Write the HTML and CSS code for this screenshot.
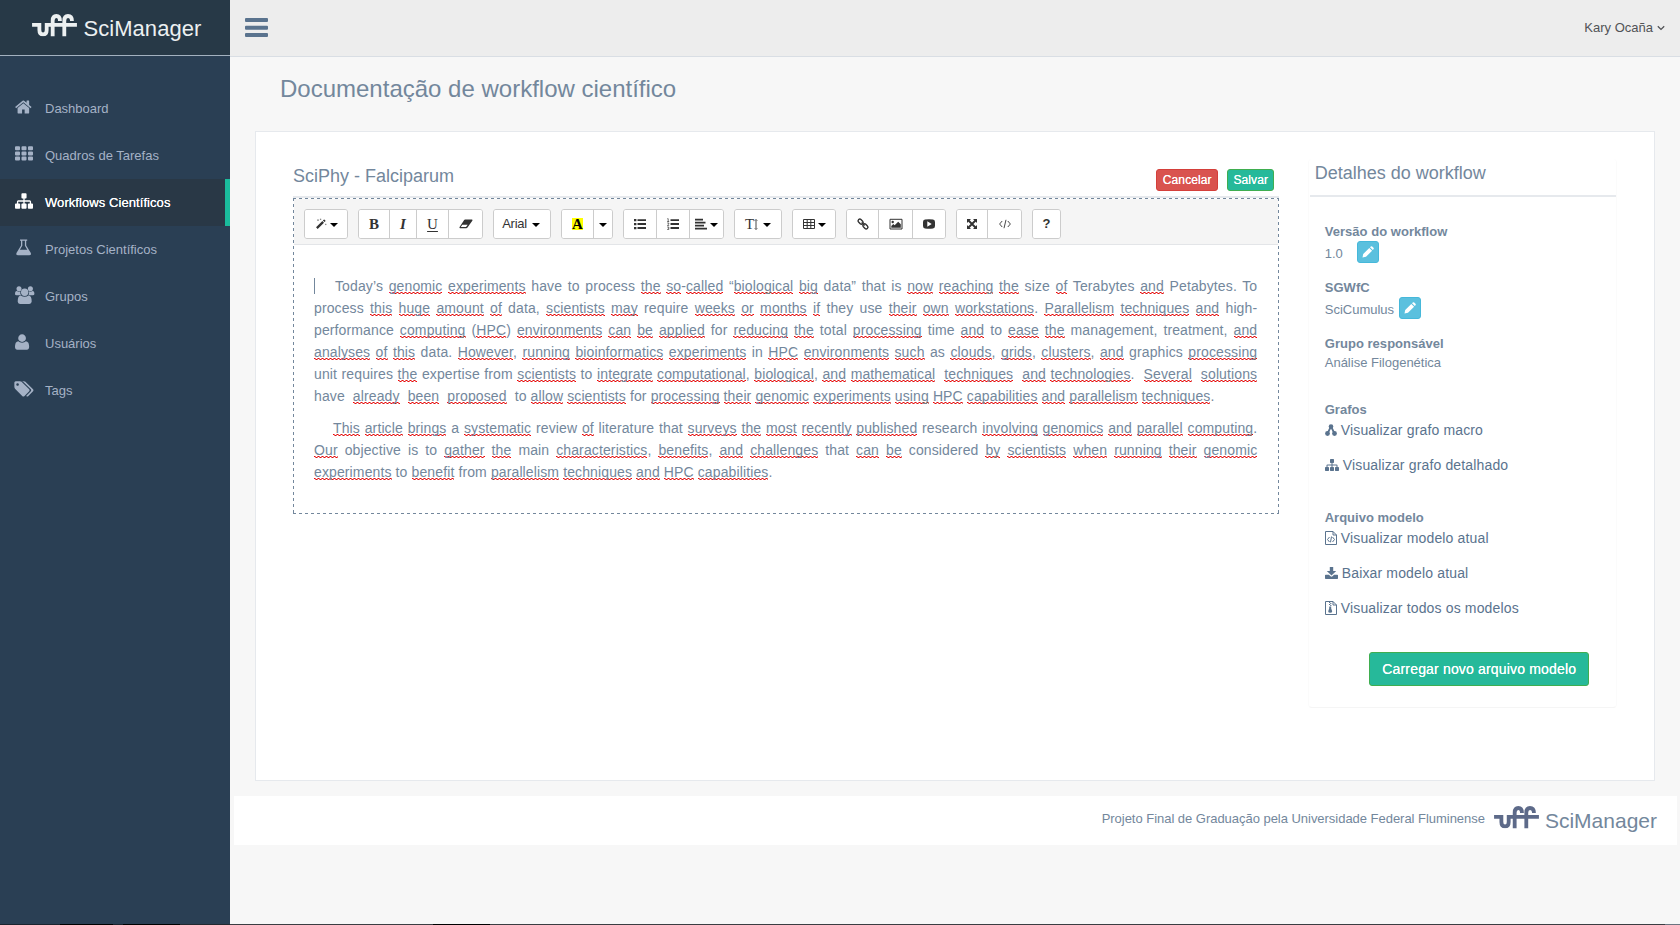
FILE: index.html
```html
<!DOCTYPE html>
<html lang="pt-BR">
<head>
<meta charset="utf-8">
<title>SciManager</title>
<link rel="stylesheet" href="styles.css">
</head>
<body>
<svg class="defs" width="0" height="0">
  <symbol id="uff" viewBox="0 0 135 68"><g fill="none" stroke="currentColor" stroke-width="11.5"><path d="M0 32.5H22V48Q22 61.500 33 61.500Q44 61.500 44 48V27"/><path d="M44 32.500H135"/><path d="M62 68V20Q62 6 73 6Q84 6 84 21"/><path d="M97 68V20Q97 6 108 6Q120 6 120 21"/></g></symbol>
  <symbol id="sitemap" viewBox="0 0 1792 1792"><path d="M1792 1248v320q0 40-28 68t-68 28h-320q-40 0-68-28t-28-68v-320q0-40 28-68t68-28h96v-192h-512v192h96q40 0 68 28t28 68v320q0 40-28 68t-68 28h-320q-40 0-68-28t-28-68v-320q0-40 28-68t68-28h96v-192h-512v192h96q40 0 68 28t28 68v320q0 40-28 68t-68 28h-320q-40 0-68-28t-28-68v-320q0-40 28-68t68-28h96v-192q0-52 38-90t90-38h512v-192h-96q-40 0-68-28t-28-68v-320q0-40 28-68t68-28h320q40 0 68 28t28 68v320q0 40-28 68t-68 28h-96v192h512q52 0 90 38t38 90v192h96q40 0 68 28t28 68z"/></symbol>
  <symbol id="pencil" viewBox="0 0 12 12"><path d="M.5 11.500L1.200 8L7.300 1.900L10.100 4.700L4 10.800ZM8 1.200L8.800.4Q9.500-.1 10.200.5L11.500 1.800Q12.100 2.500 11.500 3.200L10.800 4Z"/></symbol>
  <symbol id="caret" viewBox="0 0 8 4"><path d="M0 0H8L4 4Z"/></symbol>
</svg>

<div class="page">
  <aside class="sidebar">
    <div class="brand"><svg class="uff"><use href="#uff"/></svg><span>SciManager</span></div>
    <nav class="menu">
      <a class="item"><svg viewBox="64 0 1792 1792"><path d="M1472 992v480q0 26-19 45t-45 19h-384v-384h-256v384h-384q-26 0-45-19t-19-45v-480q0-1 .5-3t.5-3l575-474 575 474q1 2 1 6zm223-69l-62 74q-8 9-21 11h-3q-13 0-21-7l-692-577-692 577q-12 8-24 7-13-2-21-11l-62-74q-8-10-7-23.500t11-21.500l719-599q32-26 76-26t76 26l244 204v-195q0-14 9-23t23-9h192q14 0 23 9t9 23v408l219 182q10 8 11 21.500t-7 23.500z"/></svg><span>Dashboard</span></a>
      <a class="item"><svg viewBox="0 0 18 18"><path d="M0 2.300q0-1 1-1h3q1 0 1 1v2q0 1-1 1h-3q-1 0-1-1zM6.500 2.300q0-1 1-1h3q1 0 1 1v2q0 1-1 1h-3q-1 0-1-1zM13 2.300q0-1 1-1h3q1 0 1 1v2q0 1-1 1h-3q-1 0-1-1zM0 7.400q0-1 1-1h3q1 0 1 1v2q0 1-1 1h-3q-1 0-1-1zM6.500 7.400q0-1 1-1h3q1 0 1 1v2q0 1-1 1h-3q-1 0-1-1zM13 7.400q0-1 1-1h3q1 0 1 1v2q0 1-1 1h-3q-1 0-1-1zM0 12.500q0-1 1-1h3q1 0 1 1v2q0 1-1 1h-3q-1 0-1-1zM6.500 12.500q0-1 1-1h3q1 0 1 1v2q0 1-1 1h-3q-1 0-1-1zM13 12.500q0-1 1-1h3q1 0 1 1v2q0 1-1 1h-3q-1 0-1-1z"/></svg><span>Quadros de Tarefas</span></a>
      <a class="item active"><svg><use href="#sitemap"/></svg><span>Workflows Científicos</span></a>
      <a class="item"><svg viewBox="0 0 18 18"><path fill-rule="evenodd" d="M5 .5h7.200v1.300h-1V6.500l4.500 7.200q1 2.300-1.200 2.500H2.700Q.6 16 1.600 13.700L6 6.500V1.800H5zM7.300 1.800v5L4.900 10.700h7.400L9.900 6.800v-5z"/></svg><span>Projetos Científicos</span></a>
      <a class="item"><svg viewBox="0 0 18 18"><circle cx="4" cy="2.700" r="2.500"/><circle cx="15.400" cy="2.700" r="2.500"/><path d="M0 8Q0 5 1.800 5Q4 6.300 5.300 5.300Q5 7.800 6.200 9.300H1.600Q0 9.300 0 8ZM19.400 8Q19.400 5 17.600 5Q15.400 6.300 14.100 5.300Q14.400 7.800 13.200 9.300H17.800Q19.400 9.300 19.400 8Z"/><circle cx="9.700" cy="6.200" r="3.700"/><path d="M2.700 15.500Q2.700 9.800 5.800 9.600Q9.700 12.100 13.600 9.600Q16.700 9.800 16.700 15.500Q16.500 17.800 14.300 18H5Q2.800 17.800 2.700 15.500Z"/></svg><span>Grupos</span></a>
      <a class="item"><svg viewBox="192 0 1792 1792"><path d="M1600 1399q0 109-62.500 187t-150.500 78h-982q-88 0-150.500-78t-62.500-187q0-85 8.500-160.500t31.500-152 58.500-131 94-89 134.500-34.500q131 128 377 128t377-128q76 0 134.500 34.500t94 89 58.500 131 31.500 152 8.500 160.500zm-320-887q0 159-112.500 271.500t-271.500 112.500-271.500-112.500-112.500-271.500 112.500-271.500 271.500-112.500 271.500 112.500 112.500 271.500z"/></svg><span>Usuários</span></a>
      <a class="item"><svg viewBox="0 0 1792 1792"><path d="M384 448q0-53-37.500-90.500t-90.500-37.500-90.500 37.500-37.500 90.500 37.500 90.500 90.500 37.500 90.500-37.500 37.500-90.500zm1067 576q0 53-37 90l-491 492q-39 37-91 37-53 0-90-37l-715-716q-38-37-64.500-101t-26.500-117v-416q0-52 38-90t90-38h416q53 0 117 26.500t102 64.500l715 714q37 39 37 91zm384 0q0 53-37 90l-491 492q-39 37-91 37-36 0-59-14t-53-45l470-470q37-37 37-90 0-52-37-91l-715-714q-38-38-102-64.500t-117-26.500h224q53 0 117 26.500t102 64.500l715 714q37 39 37 91z"/></svg><span>Tags</span></a>
    </nav>
  </aside>

  <div class="main">
    <header class="topbar">
      <svg class="bars" viewBox="0 0 23 19"><path d="M1 0h21q1 0 1 1v2q0 1-1 1H1q-1 0-1-1V1q0-1 1-1zM1 7.700h21q1 0 1 1v2q0 1-1 1H1q-1 0-1-1v-2q0-1 1-1zM1 15h21q1 0 1 1v2q0 1-1 1H1q-1 0-1-1v-2q0-1 1-1z"/></svg>
      <div class="account"><span>Kary Ocaña</span><svg viewBox="0 0 8 6"><path d="M.8 1.200L4 4.400L7.200 1.200" fill="none" stroke="#515356" stroke-width="1.300"/></svg></div>
    </header>
    <h1 class="page-title">Documentação de workflow científico</h1>

    <section class="panel">
      <div class="doc">
        <div class="doc-head">
          <h2>SciPhy - Falciparum</h2>
          <div class="actions"><button class="btn danger">Cancelar</button><button class="btn success">Salvar</button></div>
        </div>
        <div class="editor">
          <div class="toolbar">
            <div class="group"><button class="w42 wand"><svg class="i14" viewBox="0 0 14 14"><path d="M1.200 10.900L8.600 3.500L10.500 5.400L3.100 12.800ZM9.200 2.900L10.200 1.900Q10.700 1.500 11.200 1.900L12.100 2.800Q12.500 3.300 12.100 3.800L11.100 4.800Z"/><path d="M3.500 1.500v2M2.500 2.500h2M6.500.8v1.600M5.700 1.600h1.600M12.500 6.700v1.600M11.700 7.500h1.600" stroke="#777" stroke-width=".8"/></svg><svg class="caret"><use href="#caret"/></svg></button></div>
            <div class="group"><button class="w30 serif b">B</button><button class="w27 serif it b">I</button><button class="w32 serif un">U</button><button class="w34"><svg class="i14" viewBox="0 0 14 14"><path fill-rule="evenodd" d="M6 2.500H13Q14 2.800 13.300 3.800L8.500 10.500Q8 11.200 7.300 11.300H1Q0 11 .6 10L5 3.200Q5.500 2.600 6 2.500ZM3.400 7.700L1.700 10.100H7L8.700 7.700Z"/></svg></button></div>
            <div class="group"><button class="w56 arial"><span>Arial</span><svg class="caret"><use href="#caret"/></svg></button></div>
            <div class="group"><button class="w31 serif b"><span class="mark">A</span></button><button class="w19"><svg class="caret"><use href="#caret"/></svg></button></div>
            <div class="group"><button class="w32"><svg class="i12" viewBox="0 0 12 12"><path d="M0 1h2.400v2.200H0zM0 5h2.400v2.200H0zM0 9h2.400v2.200H0zM3.500 1.200H12v1.900H3.500zM3.500 5.100H12V7H3.500zM3.500 9.100H12V11H3.500z"/></svg></button><button class="w33"><svg class="i12" viewBox="0 0 12 12"><path d="M3.500 1.200H12v1.900H3.500zM3.500 5.100H12V7H3.500zM3.500 9.100H12V11H3.500z"/><path d="M.3.700h.9v3M.2 3.500h2M.2 5h1.600v1L.4 7.400h1.800M.2 9h1.600v1.200H.8M1.800 10.200v1.300H.2" fill="none" stroke="#333" stroke-width=".7"/></svg></button><button class="w34"><svg class="i12" viewBox="0 0 12 12"><path d="M0 .7h8v1.700H0zM0 3.700h10.500v1.700H0zM0 6.700h9v1.700H0zM0 9.700h12v1.700H0z"/></svg><svg class="caret near"><use href="#caret"/></svg></button></div>
            <div class="group"><button class="w46 serif tee"><span>T</span><svg class="size" viewBox="0 0 4 11"><path d="M2 1v9M.8 1.600L2 .4l1.200 1.200M.8 9.400L2 10.600l1.200-1.200" fill="none" stroke="#333" stroke-width=".9"/></svg><svg class="caret"><use href="#caret"/></svg></button></div>
            <div class="group"><button class="w42"><svg class="i12" viewBox="0 0 12 12"><path d="M.5 1.500h11v9H.5zM.5 4.500h11M.5 7.500h11M4.200 1.500v9M7.800 1.500v9" fill="none" stroke="#333"/></svg><svg class="caret near"><use href="#caret"/></svg></button></div>
            <div class="group"><button class="w31"><svg class="i12" viewBox="0 0 12 12"><g fill="none" stroke="#333" stroke-width="1.400"><rect x="-2.800" y="-1.700" width="5.600" height="3.400" rx="1.600" transform="translate(3.600 3.600) rotate(45)"/><rect x="-2.800" y="-1.700" width="5.600" height="3.400" rx="1.600" transform="translate(8.400 8.400) rotate(45)"/><path d="M4.600 4.600l3 3"/></g></svg></button><button class="w34"><svg class="i14" viewBox="0 0 14 14"><path d="M1 2.300h12v9.700H1z" fill="none" stroke="#333"/><circle cx="3.700" cy="5" r="1.200"/><path d="M2.300 10.800V9l2-2 1.300 1.300L9.200 4.700l2.600 2.600v3.500z"/></svg></button><button class="w33"><svg class="i12" viewBox="0 0 12 12"><path fill-rule="evenodd" d="M2 1.500Q6 1 10 1.500Q12 1.700 12 4V8Q12 10.300 10 10.500Q6 11 2 10.500Q0 10.300 0 8V4Q0 1.700 2 1.500ZM4.300 3.300V8.700L8.700 6Z"/></svg></button></div>
            <div class="group"><button class="w30"><svg class="i12" viewBox="0 0 12 12"><path d="M1 1h4L1 5zM11 1v4L7 1zM1 11V7l4 4zM11 11H7l4-4z"/><path d="M2 2l8 8M10 2l-8 8" stroke="#333" stroke-width="1.900"/></svg></button><button class="w34"><svg class="i12" viewBox="0 0 12 12"><path d="M3.200 3L.6 6l2.600 3M8.800 3l2.600 3-2.600 3M7 1.800L5 10.200" fill="none" stroke="#333" stroke-width=".9"/></svg></button></div>
            <div class="group"><button class="w27 help">?</button></div>
          </div>
          <div class="content" spellcheck="false">
            <p><span class="line caret-line">Today’s <u>genomic</u> <u>experiments</u> have to process <u>the</u> <u>so</u>-<u>called</u> “<u>biological</u> <u>big</u> data” that is <u>now</u> <u>reaching</u> <u>the</u> size <u>of</u> Terabytes <u>and</u> Petabytes. To</span>
            <span class="line">process <u>this</u> <u>huge</u> <u>amount</u> <u>of</u> data, <u>scientists</u> <u>may</u> require <u>weeks</u> <u>or</u> <u>months</u> <u>if</u> they use <u>their</u> <u>own</u> <u>workstations</u>. <u>Parallelism</u> <u>techniques</u> <u>and</u> high-</span>
            <span class="line">performance <u>computing</u> (<u>HPC</u>) <u>environments</u> <u>can</u> <u>be</u> <u>applied</u> for <u>reducing</u> <u>the</u> total <u>processing</u> time <u>and</u> to <u>ease</u> <u>the</u> management, treatment, <u>and</u></span>
            <span class="line"><u>analyses</u> <u>of</u> <u>this</u> data. <u>However</u>, <u>running</u> <u>bioinformatics</u> <u>experiments</u> in <u>HPC</u> <u>environments</u> <u>such</u> as <u>clouds</u>, <u>grids</u>, <u>clusters</u>, <u>and</u> graphics <u>processing</u></span>
            <span class="line">unit requires <u>the</u> expertise from <u>scientists</u> to <u>integrate</u> <u>computational</u>, <u>biological</u>, <u>and</u> <u>mathematical</u> &nbsp;<u>techniques</u> &nbsp;<u>and</u> <u>technologies</u>. &nbsp;<u>Several</u> &nbsp;<u>solutions</u></span>
            <span class="line last">have &nbsp;<u>already</u> &nbsp;<u>been</u> &nbsp;<u>proposed</u> &nbsp;to <u>allow</u> <u>scientists</u> for <u>processing</u> <u>their</u> <u>genomic</u> <u>experiments</u> <u>using</u> <u>HPC</u> <u>capabilities</u> <u>and</u> <u>parallelism</u> <u>techniques</u>.</span></p>
            <p><span class="line indent"><u>This</u> <u>article</u> <u>brings</u> a <u>systematic</u> review <u>of</u> literature that <u>surveys</u> <u>the</u> <u>most</u> <u>recently</u> <u>published</u> research <u>involving</u> <u>genomics</u> <u>and</u> <u>parallel</u> <u>computing</u>.</span>
            <span class="line"><u>Our</u> objective is to <u>gather</u> <u>the</u> main <u>characteristics</u>, <u>benefits</u>, <u>and</u> <u>challenges</u> that <u>can</u> <u>be</u> considered <u>by</u> <u>scientists</u> <u>when</u> <u>running</u> <u>their</u> <u>genomic</u></span>
            <span class="line last"><u>experiments</u> to <u>benefit</u> from <u>parallelism</u> <u>techniques</u> <u>and</u> <u>HPC</u> <u>capabilities</u>.</span></p>
          </div>
        </div>
      </div>

      <aside class="details">
        <h2>Detalhes do workflow</h2>
        <dl>
          <dt>Versão do workflow</dt>
          <dd class="version"><span>1.0</span><button class="edit"><svg><use href="#pencil"/></svg></button></dd>
          <dt>SGWfC</dt>
          <dd><span>SciCumulus</span><button class="edit"><svg><use href="#pencil"/></svg></button></dd>
          <dt>Grupo responsável</dt>
          <dd class="plain">Análise Filogenética</dd>
        </dl>
        <div class="links">
          <h3>Grafos</h3>
          <a><svg class="n12" viewBox="0 0 12 12"><path d="M6 2.500L2.500 9.500M6 2.500L9.500 9.500" stroke="currentColor" stroke-width="1.800"/><circle cx="6" cy="2.500" r="2.300"/><circle cx="2.500" cy="9.500" r="2.400"/><circle cx="9.500" cy="9.500" r="2.400"/></svg>Visualizar grafo macro</a>
          <a><svg class="n14"><use href="#sitemap"/></svg>Visualizar grafo detalhado</a>
        </div>
        <div class="links">
          <h3>Arquivo modelo</h3>
          <a><svg class="n12" viewBox="0 0 12 14"><path d="M.5.500H8L11.500 4V13.500H.5ZM8 .5V4H11.500M4.500 6L2.500 8.500L4.500 11M7.500 6L9.500 8.500L7.500 11M6.500 5.500L5.500 11.300" fill="none" stroke="currentColor"/></svg>Visualizar modelo atual</a>
          <a><svg class="n13" viewBox="0 0 13 14"><path d="M4.800 1h3.400v4h3L6.500 9.500 1.800 5h3zM0 9.500Q0 8.800.7 8.800H4l1.500 1.500q1 .8 2 0L9 8.800h3.300q.7 0 .7.700v2.800q0 .7-.7.700H.7q-.7 0-.7-.7z"/></svg>Baixar modelo atual</a>
          <a><svg class="n12" viewBox="0 0 12 14"><path d="M.5.500H8L11.500 4V13.500H.5ZM8 .5V4H11.500" fill="none" stroke="currentColor"/><path d="M4 1h1.200v1H4zM5.200 2h1.200v1H5.200zM4 3h1.200v1H4zM5.200 4h1.200v1H5.200zM4.200 5.500h2v2l1 2.800q0 1.500-2 1.500t-2-1.500l1-2.800z"/></svg>Visualizar todos os modelos</a>
        </div>
        <button class="upload">Carregar novo arquivo modelo</button>
      </aside>
    </section>

    <footer class="footer"><span>Projeto Final de Graduação pela Universidade Federal Fluminense</span><svg class="uff"><use href="#uff"/></svg><strong>SciManager</strong></footer>
  </div>
</div>
<div class="edge"></div>
</body>
</html>
```
FILE: styles.css
```css
* { box-sizing: border-box; }
body { margin: 0; height: 925px; overflow: hidden; background: #f7f7f7; color: #73879c; font: 13px/20px "Liberation Sans", Arial, sans-serif; }
h1, h2, h3, p, dl, dd { margin: 0; font-weight: normal; }
button { font-family: inherit; padding: 0; margin: 0; }
svg { display: block; fill: currentColor; flex: none; overflow: visible; }
.defs { position: absolute; }
.uff { width: 45px; height: 22.600px; }

.page { display: flex; height: 924px; }
.edge { height: 1px; background: linear-gradient(90deg, #1b242e 0 60px, #000 60px 113px, #1b242e 113px 123px, #000 123px 180px, #22282f 180px 230px, #3a3d42 230px 433px, #000 433px 490px, #3a3d42 490px 1665px, #6a7480 1665px); }

.sidebar { width: 230px; background: #2a3f54; }
.brand { height: 56px; padding: 14px 0 0 32px; display: flex; background: #273947; border-bottom: 1px solid #a3b1bf; color: #ecf0f1; font-size: 22px; line-height: 29px; }
.brand span { margin-left: 6.500px; letter-spacing: .05px; }
.menu { padding-top: 29px; }
.item { display: flex; height: 47px; padding-left: 15px; color: #a5b2c6; line-height: 47px; }
.item svg { width: 18px; height: 18px; margin: 13px 12px 0 0; }
.item.active { background: #293846; color: #fff; border-right: 5px solid #1abb9c; letter-spacing: .07px; text-shadow: 0 0 .5px #fff; }

.main { flex: 1; }
.topbar { height: 57px; padding: 0 15px 0 15px; display: flex; justify-content: space-between; background: #ededed; border-bottom: 1px solid #d9dee4; }
.bars { width: 23px; height: 19px; margin-top: 18px; color: #5a738e; }
.account { display: flex; align-items: center; height: 55px; color: #515356; line-height: 54px; }
.account svg { width: 8px; height: 6px; margin-left: 4px; }
.account span { height: 54px; margin-top: 1px; }
.page-title { height: 56px; margin: 18px 0 0 50px; font-size: 24px; line-height: 28px; }

.panel { width: 1400px; height: 650px; margin-left: 25px; padding: 27px 37px 0; display: flex; background: #fff; border: 1px solid #e6e9ed; }
.doc { width: 987px; }
.doc-head { height: 39px; padding: 0 5px 0 0; display: flex; justify-content: space-between; border-bottom: 2px solid #e6e9ed; }
.doc-head h2 { font-size: 18px; line-height: 34px; }
.actions { display: flex; gap: 9px; padding-top: 10px; }
.btn { height: 22px; border: 1px solid #d43f3a; border-radius: 3px; color: #fff; font-size: 12px; line-height: 18px; letter-spacing: .1px; text-shadow: 0 0 .5px #fff; }
.danger { width: 62px; background: #d9534f; }
.success { width: 47px; background: #26b99a; border-color: #3fae50; }

.editor { height: 316px; padding: 1px; background:
  repeating-linear-gradient(90deg, #73879c 0 3px, transparent 3px 6px) 0 0 / 100% 1px no-repeat,
  repeating-linear-gradient(90deg, #73879c 0 3px, transparent 3px 6px) 0 100% / 100% 1px no-repeat,
  repeating-linear-gradient(#73879c 0 3px, transparent 3px 6px) 0 0 / 1px 100% no-repeat,
  repeating-linear-gradient(#73879c 0 3px, transparent 3px 6px) 100% 0 / 1px 100% no-repeat; }
.toolbar { height: 46px; padding: 10px 10px 0; display: flex; gap: 10px; background: #f5f5f5; border-bottom: 1px solid #e3e5e8; }
.group { height: 30px; display: flex; border: 1px solid #ccc; border-radius: 3px; background: #fff; overflow: hidden; }
.group button { display: flex; align-items: center; justify-content: center; border: 0; background: #fff; color: #333; font-size: 13px; line-height: 18px; }
.group button + button { border-left: 1px solid #ccc; }
.w19 { width: 19px; } .w27 { width: 27px; } .w30 { width: 30px; }
.w31 { width: 31px; } .w32 { width: 32px; } .w33 { width: 33px; }
.w34 { width: 34px; } .w42 { width: 42px; } .w46 { width: 46px; } .w56 { width: 56px; }
.group .serif { font-family: "Liberation Serif", serif; font-size: 15px; }
.group .b { font-weight: bold; }
.it { font-style: italic; }
.un { text-decoration: underline; text-underline-offset: 2px; }
.group .help { font-weight: bold; font-size: 13px; }
.mark { background: #ff0; color: #000; line-height: 12px; }
.i14 { width: 14px; height: 14px; }
.i12 { width: 12px; height: 12px; }
.wand .i14 { width: 12px; height: 12px; }
.caret { width: 8px; height: 4px; margin: 2px 0 0; color: #000; }
.wand .caret, .caret.near { margin-left: 3px; }
.arial { letter-spacing: -.3px; }
.group .arial { padding-right: 2px; }
.arial .caret, .tee .caret { margin-left: 5px; }
.size { width: 4px; height: 11px; }

.content { padding: 30px 21px 0 20px; font-size: 14px; line-height: 22px; letter-spacing: .12px; }
.content p { margin-bottom: 10px; }
.line { display: block; height: 22px; text-align: justify; text-align-last: justify; white-space: normal; }
.line.last { text-align-last: left; }
.caret-line { padding-left: 21px; background: linear-gradient(#73879c, #73879c) 0 3px / 1px 16px no-repeat; }
.indent { padding-left: 19px; }
u { text-decoration: none; background:
  repeating-linear-gradient(90deg, #f00 0 1px, #d77 1px 2px, #fff 2px 3px, #d77 3px 4px) 0 calc(100% - 1px) / 100% 1px no-repeat,
  repeating-linear-gradient(90deg, #fff 0 1px, #d77 1px 2px, #f00 2px 3px, #d77 3px 4px) 0 100% / 100% 1px no-repeat; }

.details { width: 309px; height: 549px; margin-left: 29px; border: 1px solid #fbfbfb; border-bottom-color: #f5f5f5; border-top: 0; border-radius: 4px; }
.details h2 { height: 38px; margin: 0 0 0 1px; padding-left: 4.500px; font-size: 18px; line-height: 28px; border-bottom: 2px solid #e6e9ed; }
.details dl { height: 204px; padding: 26px 0 0 15.500px; }
dt { height: 18px; line-height: 18px; font-weight: bold; letter-spacing: .03px; }
dd { height: 38px; display: flex; align-items: flex-start; line-height: 22px; }
dd span { margin-top: 2px; }
.plain { padding-top: 1px; line-height: 18px; }
.edit { width: 22px; height: 22px; margin-left: 4.500px; padding: 4px; border: 1px solid #46b8da; border-radius: 3px; background: #5bc0de; color: #fff; }
.edit svg { width: 12px; height: 12px; }
.version .edit { margin-left: 14px; }
.links { height: 108px; padding-left: 15.500px; }
.links h3 { font-size: 13px; line-height: 18px; height: 19px; font-weight: bold; }
.links a { display: flex; height: 35px; color: #5a738e; font-size: 14px; line-height: 20px; letter-spacing: .15px; }
.links svg { margin: 3px 4px 0 0; }
.n12 { width: 12px; height: 14px; } .n13 { width: 13px; height: 14px; } .n14 { width: 14px; height: 14px; }
.upload { display: block; width: 220px; height: 34px; margin: 35px 0 0 60px; border: 1px solid #3fae50; border-radius: 3px; background: #26b99a; color: #fff; font-size: 14px; letter-spacing: .17px; text-shadow: 0 0 .5px #fff; }

.footer { height: 49px; margin: 15px 3px 0 4px; padding-right: 20px; display: flex; justify-content: flex-end; background: #fff; line-height: 45px; }
.footer span { letter-spacing: -.03px; }
.footer .uff { margin: 10px 6px 0 9px; color: #5d6a89; }
.footer strong { font-weight: normal; font-size: 21px; line-height: 50px; }
```
